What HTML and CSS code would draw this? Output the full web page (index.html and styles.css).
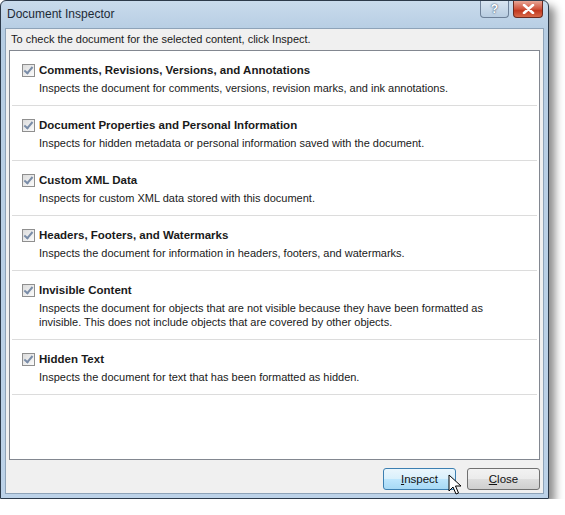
FILE: index.html
```html
<!DOCTYPE html>
<html lang="en">
<head>
    <meta charset="UTF-8">
    <title>Document Inspector</title>
    <link rel="stylesheet" href="styles.css">
</head>
<body>
    <div class="window">
        <div class="titlebar">
            <span class="title">Document Inspector</span>
            <div class="caption-btns">
                <span class="cap-btn help">?</span>
                <span class="cap-btn close">
                    <svg width="13" height="10" viewBox="0 0 13 10"><path d="M2 1 L11 9 M11 1 L2 9" stroke="#fff" stroke-width="2.6" stroke-linecap="round"/></svg>
                </span>
            </div>
        </div>
        <div class="client">
            <p class="intro">To check the document for the selected content, click Inspect.</p>
            <div class="list">
                <div class="item">
                    <span class="check"></span>
                    <div class="text">
                        <div class="name">Comments, Revisions, Versions, and Annotations</div>
                        <div class="desc">Inspects the document for comments, versions, revision marks, and ink annotations.</div>
                    </div>
                </div>
                <div class="item">
                    <span class="check"></span>
                    <div class="text">
                        <div class="name">Document Properties and Personal Information</div>
                        <div class="desc">Inspects for hidden metadata or personal information saved with the document.</div>
                    </div>
                </div>
                <div class="item">
                    <span class="check"></span>
                    <div class="text">
                        <div class="name">Custom XML Data</div>
                        <div class="desc">Inspects for custom XML data stored with this document.</div>
                    </div>
                </div>
                <div class="item">
                    <span class="check"></span>
                    <div class="text">
                        <div class="name">Headers, Footers, and Watermarks</div>
                        <div class="desc">Inspects the document for information in headers, footers, and watermarks.</div>
                    </div>
                </div>
                <div class="item">
                    <span class="check"></span>
                    <div class="text">
                        <div class="name">Invisible Content</div>
                        <div class="desc">Inspects the document for objects that are not visible because they have been formatted as<br>invisible. This does not include objects that are covered by other objects.</div>
                    </div>
                </div>
                <div class="item">
                    <span class="check"></span>
                    <div class="text">
                        <div class="name">Hidden Text</div>
                        <div class="desc">Inspects the document for text that has been formatted as hidden.</div>
                    </div>
                </div>
            </div>
            <div class="buttons">
                <button class="btn hot"><u>I</u>nspect</button>
                <button class="btn"><u>C</u>lose</button>
                <svg class="cursor" width="14" height="22" viewBox="0 0 14 22"><path d="M1 1 L1 17 L5 13 L8 20 L10.5 19 L7.5 12 L13 12 Z" fill="#fff" stroke="#000" stroke-width="1"/></svg>
            </div>
        </div>
    </div>
</body>
</html>
```

FILE: styles.css
```css
body {
    margin: 0;
    background: #fff;
    font-family: "Liberation Sans", Tahoma, sans-serif;
    font-size: 11px;
    color: #1a1a1a;
}
.window {
    width: 549px;
    height: 499px;
    border: 1px solid #2c3a4a;
    border-radius: 6px 6px 0 0;
    background: linear-gradient(#c9dbec, #b6cde3 30px, #bcd2e8);
    box-shadow: 6px 6px 8px rgba(0, 0, 0, 0.45);
    display: flex;
    flex-direction: column;
    padding: 0 4px 4px 4px;
    box-sizing: border-box;
}
.titlebar {
    height: 27px;
    display: flex;
    align-items: center;
    justify-content: space-between;
}
.title {
    font-size: 12px;
    color: #1e2a36;
    padding-left: 2px;
    margin-top: -1px;
}
.caption-btns {
    display: flex;
    align-self: flex-start;
    margin-right: 1px;
    gap: 4px;
}
.cap-btn {
    height: 17px;
    border: 1px solid #6d8098;
    border-top: none;
    border-radius: 0 0 4px 4px;
    display: flex;
    align-items: center;
    justify-content: center;
    box-sizing: border-box;
}
.help {
    width: 29px;
    background: linear-gradient(#d8e5f1, #b8cde1);
    color: #fff;
    font-weight: bold;
    font-size: 12px;
    text-shadow: 0 0 2px #4a5e78, 0 0 1px #4a5e78;
}
.close {
    width: 30px;
    background: linear-gradient(#e8a696, #d0533c 50%, #c2391f 60%, #d86a4a);
    border-color: #6b2a1f;
}
.client {
    flex: 1;
    background: #f0f0f0;
    border: 1px solid #8ea3b8;
    display: flex;
    flex-direction: column;
    padding: 0 3px 0 3px;
}
.intro {
    margin: 3px 0 0 2px;
    height: 18px;
    line-height: 14px;
}
.list {
    height: 408px;
    background: #fff;
    border: 1px solid #828790;
    padding: 0 2px;
}
.item {
    display: flex;
    align-items: flex-start;
    border-bottom: 1px solid #dcdcdc;
    padding: 11px 0 10px 10px;
    gap: 4px;
}
.check {
    width: 11px;
    height: 11px;
    border: 1px solid #8f8f8f;
    background: linear-gradient(135deg, #dcdcdc, #fbfbfb);
    margin-top: 2px;
    position: relative;
    flex-shrink: 0;
}
.check::after {
    content: "";
    position: absolute;
    left: 3px;
    top: 0px;
    width: 3px;
    height: 7px;
    border: solid #7a8da8;
    border-width: 0 2px 2px 0;
    transform: rotate(40deg);
}
.name {
    font-weight: bold;
    font-size: 11.5px;
    line-height: 16px;
}
.desc {
    margin-top: 3px;
    line-height: 14px;
    white-space: nowrap;
}
.buttons {
    display: flex;
    justify-content: flex-end;
    gap: 11px;
    padding: 8px 0 0 0;
    position: relative;
}
.btn {
    width: 73px;
    height: 22px;
    font-family: "Liberation Sans", Tahoma, sans-serif;
    font-size: 11.5px;
    color: #111;
    border: 1px solid #707070;
    border-radius: 3px;
    background: linear-gradient(#f2f2f2, #ebebeb 50%, #dddddd 51%, #cfcfcf);
    padding: 0;
}
.btn.hot {
    border-color: #3c7fb1;
    background: linear-gradient(#eaf6fd, #d9f0fc 50%, #bee6fd 51%, #a7d9f5);
}
.cursor {
    position: absolute;
    left: 439px;
    top: 14px;
}
```
